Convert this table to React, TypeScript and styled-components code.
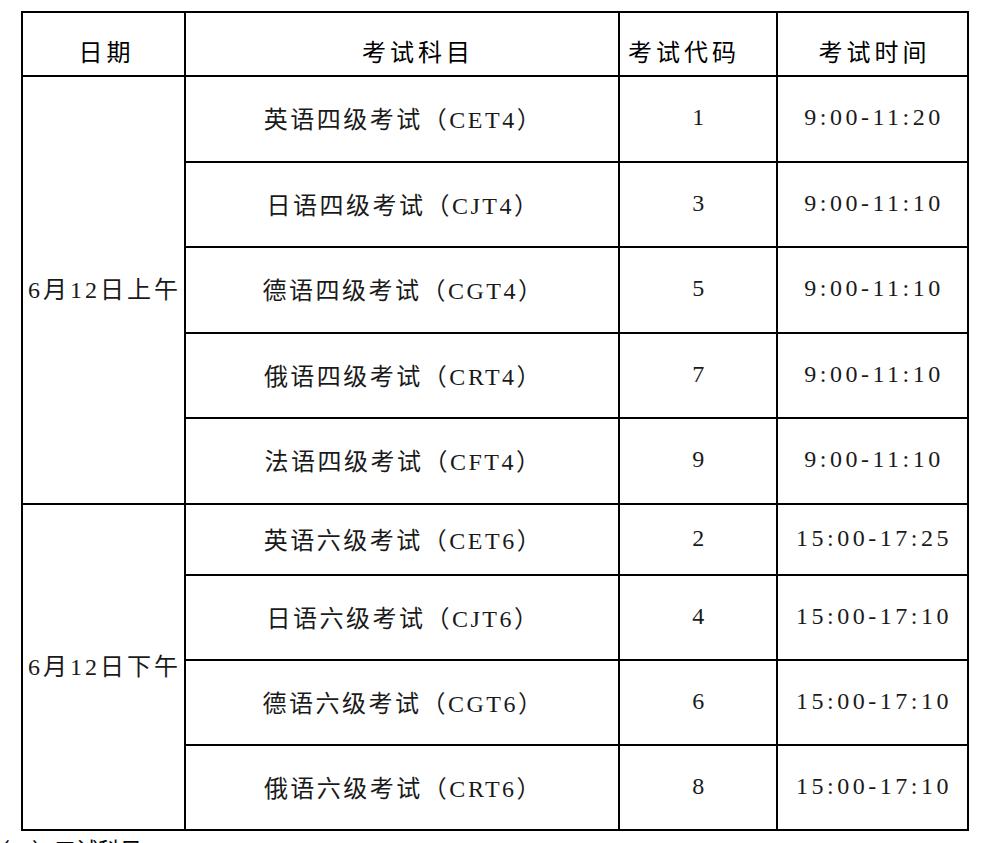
import React from "react";
import styled, { createGlobalStyle } from "styled-components";

const GlobalStyle = createGlobalStyle`
    html, body {
        margin: 0;
        padding: 0;
        background: #fff;
    }
    body {
        font-family: "Liberation Serif", "Noto Sans CJK SC", serif;
        color: #000;
        overflow: hidden;
    }
`;

const Page = styled.div`
    display: flex;
    flex-direction: column;
    width: 991px;
    height: 843px;
    overflow: hidden;
`;

// the line above the table is cut off by the top of the picture
const Caption = styled.div`
    font-size: 22px;
    line-height: 24px;
    height: 24px;
    margin: -23px 0 10px 10px;
    white-space: nowrap;
`;

const Footnote = styled.div`
    font-size: 22px;
    line-height: 24px;
    margin: 8px 0 0 -12px;
    white-space: nowrap;
`;

const Table = styled.table`
    margin-left: 21px;
    width: 948px;
    table-layout: fixed;
    border-collapse: separate;
    border-spacing: 0;
    border-top: 2px solid #000;
    border-left: 2px solid #000;
`;

const Row = styled.tr<{ $h: number }>`
    height: ${(p) => p.$h}px;
`;

// $shift moves the title off the centre of its cell, as in the source sheet
const HeadCell = styled.th<{ $shift?: number }>`
    box-sizing: border-box;
    border-right: 2px solid #000;
    border-bottom: 2px solid #000;
    padding-top: 12px;
    padding-bottom: 0;
    padding-left: ${(p) => 4 + Math.max(0, (p.$shift || 0) * 2)}px;
    padding-right: ${(p) => Math.max(0, -(p.$shift || 0) * 2)}px;
    font-size: 24px;
    font-weight: 400;
    letter-spacing: 4px;
    text-align: center;
    vertical-align: middle;
    white-space: nowrap;
    color: #000;
`;

const Cell = styled.td`
    box-sizing: border-box;
    border-right: 2px solid #000;
    border-bottom: 2px solid #000;
    padding: 0 0 3px 3px;
    font-size: 24px;
    letter-spacing: 2.5px;
    text-align: center;
    vertical-align: middle;
    white-space: nowrap;
    color: #1a1a1a;
`;

const DateCell = styled(Cell)`
    letter-spacing: 3px;
    padding-left: 2px;
    padding-bottom: 5px;
`;

const TimeCell = styled(Cell)`
    letter-spacing: 3.5px;
    padding-left: 3px;
`;

type Exam = { name: string; code: number; time: string; h: number };

const morning: Exam[] = [
    { name: "英语四级考试（CET4）", code: 1, time: "9:00-11:20", h: 86 },
    { name: "日语四级考试（CJT4）", code: 3, time: "9:00-11:10", h: 85 },
    { name: "德语四级考试（CGT4）", code: 5, time: "9:00-11:10", h: 86 },
    { name: "俄语四级考试（CRT4）", code: 7, time: "9:00-11:10", h: 85 },
    { name: "法语四级考试（CFT4）", code: 9, time: "9:00-11:10", h: 86 },
];

const afternoon: Exam[] = [
    { name: "英语六级考试（CET6）", code: 2, time: "15:00-17:25", h: 71 },
    { name: "日语六级考试（CJT6）", code: 4, time: "15:00-17:10", h: 85 },
    { name: "德语六级考试（CGT6）", code: 6, time: "15:00-17:10", h: 85 },
    { name: "俄语六级考试（CRT6）", code: 8, time: "15:00-17:10", h: 85 },
];

const Group = ({ date, exams }: { date: string; exams: Exam[] }) => (
    <>
        {exams.map((e, i) => (
            <Row key={e.code} $h={e.h}>
                {i === 0 ? <DateCell rowSpan={exams.length}>{date}</DateCell> : null}
                <Cell>{e.name}</Cell>
                <Cell>{e.code}</Cell>
                <TimeCell>{e.time}</TimeCell>
            </Row>
        ))}
    </>
);

export default function App() {
    return (
        <Page>
            <GlobalStyle />
            <Caption>附表：考试安排</Caption>
            <Table>
                <colgroup>
                    <col style={{ width: 163 }} />
                    <col style={{ width: 434 }} />
                    <col style={{ width: 158 }} />
                    <col style={{ width: 191 }} />
                </colgroup>
                <thead>
                    <Row $h={64}>
                        <HeadCell $shift={1}>日期</HeadCell>
                        <HeadCell $shift={14}>考试科目</HeadCell>
                        <HeadCell $shift={-16}>考试代码</HeadCell>
                        <HeadCell>考试时间</HeadCell>
                    </Row>
                </thead>
                <tbody>
                    <Group date="6月12日上午" exams={morning} />
                    <Group date="6月12日下午" exams={afternoon} />
                </tbody>
            </Table>
            <Footnote>（二）口试科目</Footnote>
        </Page>
    );
}
